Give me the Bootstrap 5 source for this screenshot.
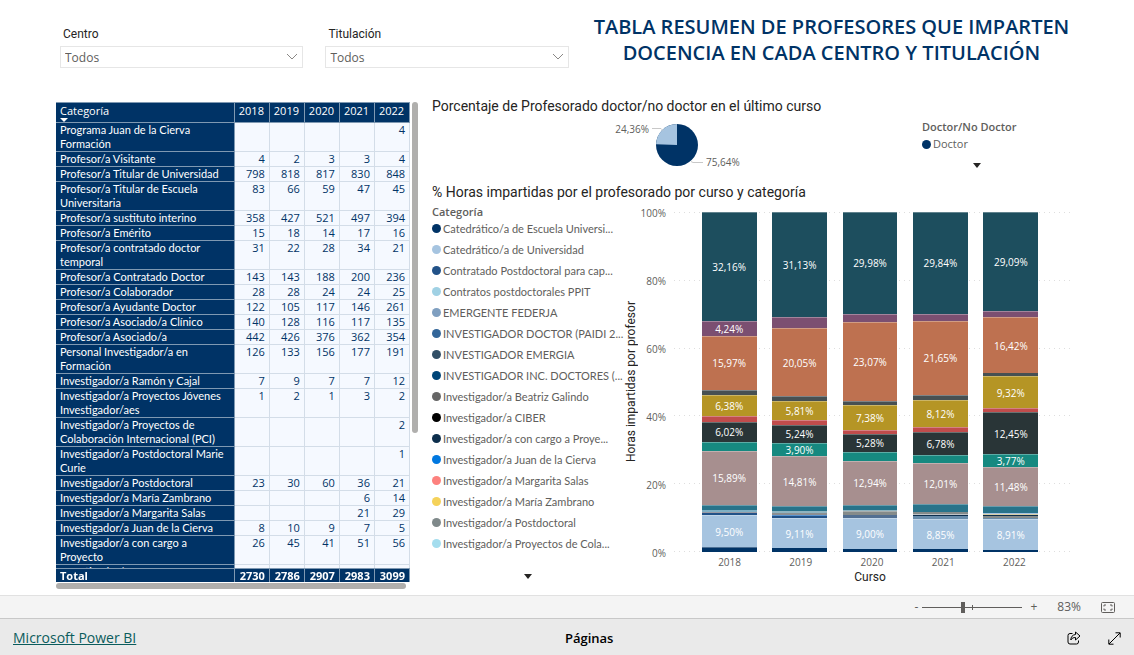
<!DOCTYPE html>
<html lang="es">
<head>
<meta charset="utf-8">
<meta name="viewport" content="width=device-width, initial-scale=1">
<title>Tabla resumen de profesores</title>
<link href="https://cdn.jsdelivr.net/npm/bootstrap@5.3.0/dist/css/bootstrap.min.css" rel="stylesheet">
<style>
  :root { --navy: #003366; --soft: #605e5c; --ink: #252423; }
  body { font-family: "Open Sans", "Noto Sans", sans-serif; font-size: 11px; line-height: 14px; color: var(--ink); }
  .din { font-family: Roboto, sans-serif; }
  .report { padding: 14px 64px 0 56px; }
  .slicers { padding-left: 4px; gap: 22px; flex: 512 1 0; }
  .slicers label { font-size: 12px; line-height: 16px; padding: 12px 0 4px 3px; }
  .slicers select { height: 22px; font-size: 12px; line-height: 16px; padding: 3px 24px 1px 4px; border: 1px solid #e6e6e6; border-radius: 0; color: var(--soft);
    background: #fff url("data:image/svg+xml,%3csvg xmlns='http://www.w3.org/2000/svg' viewBox='0 0 12 8'%3e%3cpath fill='none' stroke='%238a8886' d='M1 1l5 5 5-5'/%3e%3c/svg%3e") no-repeat right 4px center / 12px 8px; }
  .headline { flex: 480 1 0; margin-left: 24px; font-size: 20px; line-height: 26px; font-weight: 600; color: var(--navy); }
  .panels { display: grid; grid-template-columns: minmax(0, 362fr) minmax(0, 638fr); gap: 14px; margin-top: 34px; }

  .matrix-wrap { display: grid; grid-template-columns: minmax(0, 1fr) 6px; column-gap: 2px; row-gap: 1px; }
  .matrix-view { height: 480px; overflow: hidden; }
  .matrix { width: 100%; table-layout: fixed; border-collapse: separate; border-spacing: 0; color: var(--navy); }
  .matrix .col-name { width: 50.5%; }
  .matrix th, .matrix td { padding: 0 4px; vertical-align: top; line-height: 14px; border-right: 1px solid #d3dde8; border-bottom: 1px solid #d3dde8; }
  .matrix td { text-align: right; background: #f5f9ff; }
  .matrix th { font-weight: 400; color: #fff; background: var(--navy); border-color: #7f99b2; }
  .matrix tbody th, .legend-list { font-family: Lato, "Open Sans", sans-serif; }
  .matrix thead th { position: sticky; top: 0; height: 21px; border-top: 1px solid #7f99b2; padding-top: 1px; }
  .matrix tfoot th { position: sticky; bottom: 0; height: 14px; line-height: 13px; font-weight: 700; border-bottom: 0; border-top: 1px solid #7f99b2; }
  .matrix tfoot th + th { text-align: right; }
  .sort-mark { display: block; width: 8px; height: 4px; }
  .thumb-y { height: 331px; border-radius: 3px; background: #b0afad; }
  .thumb-x { width: 99%; height: 6px; border-radius: 3px; background: #b0afad; }

  .chart-title { font-size: 14px; line-height: 18px; font-weight: 400; margin: 0; }
  .pie-title { margin-top: -5px; }
  .pie-row { display: grid; grid-template-columns: 490fr 148fr; padding: 4px 0 6px; }
  .legend-head { font-weight: 600; color: var(--soft); }
  .dot { flex: none; width: 9px; height: 9px; border-radius: 50%; background: var(--navy); }
  .key { gap: 2px; color: var(--soft); }
  .pie-legend { padding-top: 1px; }
  .pie-legend .key { line-height: 20px; }
  .legend-list .key { line-height: 21px; }
  .legend-more { margin-top: 20px; }
  .col-legend { flex: 192 1 0; min-width: 0; padding-top: 4px; }
  .legend-list { margin-top: -1px; }
  .col-plot { flex: 446 1 0; min-width: 0; padding-top: 11px; }
  .y-title { writing-mode: vertical-rl; transform: rotate(180deg); width: 14px; height: 340px; font-size: 12px; text-align: center; }
  .y-ticks { width: 28px; height: 354px; font-size: 10px; color: var(--soft); text-align: right; margin: -6px 8px -8px 0; }
  .plot { height: 340px; padding: 0 24px 0 20px; position: relative; }
  .grid-lines { position: absolute; inset: 0; }
  .grid-lines i { height: 1px; background: repeating-linear-gradient(90deg, #dedede 0 1px, transparent 1px 5px); }
  .bar { position: relative; width: 78%; height: 100%; }
  .seg { color: #fff; font-size: 10px; line-height: 12px; overflow: hidden; display: flex; align-items: center; justify-content: center; }
  .seg.edge { border-top: 1px solid rgba(255, 255, 255, .3); }
  .x-ticks { padding: 3px 20px 0; font-size: 10px; color: var(--soft); }
  .plot-side { flex: 1; min-width: 0; }
  .x-title { font-size: 12px; line-height: 16px; padding-right: 4px; }

  .zoom-bar { height: 23px; background: #f4f4f4; border-top: 1px solid #e1e1e1; padding-right: 19px; color: var(--soft); font-size: 12px; }
  .zoom-bar button, .foot button { background: none; border: 0; padding: 0; color: inherit; display: flex; align-items: center; justify-content: center; }
  .zoom-bar input { -webkit-appearance: none; appearance: none; width: 100px; height: 12px; margin: 0;
    background: linear-gradient(#605e5c, #605e5c) 50px 50% / 1px 5px no-repeat, linear-gradient(#605e5c, #605e5c) 0 50% / 100% 1px no-repeat; }
  .zoom-bar input::-webkit-slider-thumb { -webkit-appearance: none; width: 4px; height: 11px; background: #605e5c; border-radius: 0; }
  .foot { height: 37px; background: #eaeaea; border-top: 1px solid #c8c8c8; padding: 2px 0 0 13px; font-size: 13px; line-height: 20px; }
  .foot a { color: #0b5c5c; font-size: 14px; }
  .foot button { width: 40px; height: 34px; color: #000; }
  .foot-tools { padding-left: 12px; }
</style>
</head>
<body class="d-flex flex-column min-vh-100 bg-white">
<main class="report flex-grow-1">
  <header class="d-flex align-items-start">
    <div class="slicers d-flex">
      <div class="d-flex flex-column flex-fill"><label class="din" for="centro">Centro</label>
        <select id="centro" class="form-select"><option>Todos</option></select></div>
      <div class="d-flex flex-column flex-fill"><label class="din" for="titulacion">Titulación</label>
        <select id="titulacion" class="form-select"><option>Todos</option></select></div>
    </div>
    <h1 class="headline text-center mb-0">TABLA RESUMEN DE PROFESORES QUE IMPARTEN DOCENCIA EN CADA CENTRO Y TITULACIÓN</h1>
  </header>

  <div class="panels">
    <section class="matrix-wrap align-content-start">
      <div class="matrix-view">
        <table class="matrix">
          <colgroup><col class="col-name"><col><col><col><col><col></colgroup>
          <thead><tr><th scope="col">Categoría<svg class="sort-mark" viewBox="0 0 8 4"><path fill="#fff" d="M0 0h8L4 4z"/></svg></th><th scope="col">2018</th><th scope="col">2019</th><th scope="col">2020</th><th scope="col">2021</th><th scope="col">2022</th></tr></thead>
          <tbody>
            <tr><th scope="row">Programa Juan de la Cierva Formación</th><td></td><td></td><td></td><td></td><td>4</td></tr>
            <tr><th scope="row">Profesor/a Visitante</th><td>4</td><td>2</td><td>3</td><td>3</td><td>4</td></tr>
            <tr><th scope="row">Profesor/a Titular de Universidad</th><td>798</td><td>818</td><td>817</td><td>830</td><td>848</td></tr>
            <tr><th scope="row">Profesor/a Titular de Escuela Universitaria</th><td>83</td><td>66</td><td>59</td><td>47</td><td>45</td></tr>
            <tr><th scope="row">Profesor/a sustituto interino</th><td>358</td><td>427</td><td>521</td><td>497</td><td>394</td></tr>
            <tr><th scope="row">Profesor/a Emérito</th><td>15</td><td>18</td><td>14</td><td>17</td><td>16</td></tr>
            <tr><th scope="row">Profesor/a contratado doctor temporal</th><td>31</td><td>22</td><td>28</td><td>34</td><td>21</td></tr>
            <tr><th scope="row">Profesor/a Contratado Doctor</th><td>143</td><td>143</td><td>188</td><td>200</td><td>236</td></tr>
            <tr><th scope="row">Profesor/a Colaborador</th><td>28</td><td>28</td><td>24</td><td>24</td><td>25</td></tr>
            <tr><th scope="row">Profesor/a Ayudante Doctor</th><td>122</td><td>105</td><td>117</td><td>146</td><td>261</td></tr>
            <tr><th scope="row">Profesor/a Asociado/a Clínico</th><td>140</td><td>128</td><td>116</td><td>117</td><td>135</td></tr>
            <tr><th scope="row">Profesor/a Asociado/a</th><td>442</td><td>426</td><td>376</td><td>362</td><td>354</td></tr>
            <tr><th scope="row">Personal Investigador/a en Formación</th><td>126</td><td>133</td><td>156</td><td>177</td><td>191</td></tr>
            <tr><th scope="row">Investigador/a Ramón y Cajal</th><td>7</td><td>9</td><td>7</td><td>7</td><td>12</td></tr>
            <tr><th scope="row">Investigador/a Proyectos Jóvenes Investigador/aes</th><td>1</td><td>2</td><td>1</td><td>3</td><td>2</td></tr>
            <tr><th scope="row">Investigador/a Proyectos de Colaboración Internacional (PCI)</th><td></td><td></td><td></td><td></td><td>2</td></tr>
            <tr><th scope="row">Investigador/a Postdoctoral Marie Curie</th><td></td><td></td><td></td><td></td><td>1</td></tr>
            <tr><th scope="row">Investigador/a Postdoctoral</th><td>23</td><td>30</td><td>60</td><td>36</td><td>21</td></tr>
            <tr><th scope="row">Investigador/a María Zambrano</th><td></td><td></td><td></td><td>6</td><td>14</td></tr>
            <tr><th scope="row">Investigador/a Margarita Salas</th><td></td><td></td><td></td><td>21</td><td>29</td></tr>
            <tr><th scope="row">Investigador/a Juan de la Cierva</th><td>8</td><td>10</td><td>9</td><td>7</td><td>5</td></tr>
            <tr><th scope="row">Investigador/a con cargo a Proyecto</th><td>26</td><td>45</td><td>41</td><td>51</td><td>56</td></tr>
            <tr><th scope="row">Investigador/a CIBER</th><td>2</td><td>2</td><td>2</td><td>4</td><td>2</td></tr>
          </tbody>
          <tfoot><tr><th scope="row">Total</th><th>2730</th><th>2786</th><th>2907</th><th>2983</th><th>3099</th></tr></tfoot>
        </table>
      </div>
      <div class="thumb-y"></div>
      <div class="thumb-x"></div>
    </section>

    <section>
      <h2 class="chart-title pie-title din">Porcentaje de Profesorado doctor/no doctor en el último curso</h2>
      <div class="pie-row">
        <svg class="d-block mx-auto" width="130" height="50" viewBox="0 0 130 50" font-size="10" fill="#605e5c" role="img" aria-label="Doctor 75,64%, no doctor 24,36%">
          <circle cx="65" cy="26" r="21" fill="#003366"/>
          <path d="M65 26V5A21 21 0 0 0 44 25.200z" fill="#a6c4e0"/>
          <path d="M40 9.500h9l2 2M79 42.500l2 1h10" fill="none" stroke="#c8c8c8"/>
          <text x="37" y="14" text-anchor="end">24,36%</text><text x="94" y="47">75,64%</text>
        </svg>
        <div class="pie-legend">
          <div class="legend-head">Doctor/No Doctor</div>
          <div class="key d-flex align-items-center"><span class="dot"></span>Doctor</div>
          <svg class="d-block mt-2" width="110" height="7"><path d="M51 1h8l-4 5z" fill="#252423"/></svg>
        </div>
      </div>
      <h2 class="chart-title din mt-2">% Horas impartidas por el profesorado por curso y categoría</h2>
      <div class="d-flex">
        <div class="col-legend">
          <div class="legend-head">Categoría</div>
          <div class="legend-list" id="keys"></div>
          <svg class="legend-more d-block mx-auto" width="8" height="6"><path d="M0 0h8l-4 5z" fill="#252423"/></svg>
        </div>
        <div class="col-plot d-flex">
          <div class="y-title din">Horas impartidas por profesor</div>
          <div class="y-ticks d-flex flex-column justify-content-between"><span>100%</span><span>80%</span><span>60%</span><span>40%</span><span>20%</span><span>0%</span></div>
          <div class="plot-side">
            <div class="plot d-flex">
              <div class="grid-lines d-flex flex-column justify-content-between"><i></i><i></i><i></i><i></i><i></i><i></i></div>
              <div class="d-flex flex-fill" id="bars"></div>
            </div>
            <div class="x-ticks d-flex text-center"><span class="flex-fill">2018</span><span class="flex-fill">2019</span><span class="flex-fill">2020</span><span class="flex-fill">2021</span><span class="flex-fill">2022</span></div>
            <div class="x-title din text-center">Curso</div>
          </div>
        </div>
      </div>
    </section>
  </div>
</main>

<div class="zoom-bar d-flex align-items-center justify-content-end">
  <button type="button" aria-label="Reducir">-</button>
  <input class="mx-1" type="range" min="0" max="100" value="40" aria-label="Zoom">
  <button type="button" class="ms-1" aria-label="Ampliar">+</button>
  <span class="mx-3 px-1">83%</span>
  <button type="button" aria-label="Ajustar a la página"><svg width="14" height="11" viewBox="0 0 14 11" fill="none" stroke="currentColor"><rect x=".5" y=".5" width="13" height="10" rx="1"/><path d="M3 4.500v-1.500h2M9 3h2v1.500M11 6.500v1.500h-2M5 8h-2v-1.500"/></svg></button>
</div>
<footer class="foot d-flex align-items-center justify-content-between">
  <a href="#">Microsoft Power BI</a>
  <span class="fw-semibold text-black">Páginas</span>
  <div class="foot-tools d-flex">
    <button type="button" aria-label="Compartir"><svg width="14" height="14" viewBox="0 0 14 14" fill="none" stroke="currentColor" stroke-linejoin="round"><path d="M5.500 2.500H3a2 2 0 0 0-2 2V11a2 2 0 0 0 2 2h6.500a2 2 0 0 0 2-2V9.500"/><path d="M8.500 1l4.500 4-4.500 4V6.500C6.500 6.500 5 7 3.800 9c0-3 1.700-5.200 4.700-5.500z"/></svg></button>
    <button type="button" aria-label="Pantalla completa"><svg width="13" height="13" viewBox="0 0 13 13" fill="none" stroke="currentColor"><path d="M1 12L12 1M7.500 .8h4.700v4.700M.8 7.500v4.700h4.700"/></svg></button>
  </div>
</footer>

<script src="https://cdn.jsdelivr.net/npm/bootstrap@5.3.0/dist/js/bootstrap.bundle.min.js"></script>
<script>
  const keys = [
    ['Catedrático/a de Escuela Universi...', '#003366'], ['Catedrático/a de Universidad', '#a6c4e0'],
    ['Contratado Postdoctoral para cap...', '#225288'], ['Contratos postdoctorales PPIT', '#a0d1e4'],
    ['EMERGENTE FEDERJA', '#7f9fc0'], ['INVESTIGADOR DOCTOR (PAIDI 2...', '#336699'],
    ['INVESTIGADOR EMERGIA', '#324f66'], ['INVESTIGADOR INC. DOCTORES (...', '#004578'],
    ['Investigador/a Beatriz Galindo', '#666666'], ['Investigador/a CIBER', '#000000'],
    ['Investigador/a con cargo a Proye...', '#0d2f4d'], ['Investigador/a Juan de la Cierva', '#0078e0'],
    ['Investigador/a Margarita Salas', '#fd817e'], ['Investigador/a María Zambrano', '#f5d25a'],
    ['Investigador/a Postdoctoral', '#7f898a'], ['Investigador/a Proyectos de Cola...', '#a4ddee']];
  document.getElementById('keys').innerHTML = keys.map(([name, color]) =>
    `<div class="key d-flex align-items-center text-nowrap"><span class="dot" style="background:${color}"></span>${name}</div>`).join('');

  // Each segment, top to bottom: share, colour, and 1 where the share is written on it
  const T = '#1d4e5e', P = '#7b4f71', O = '#be7150', S = '#475052', G = '#b59525', R = '#c04c4c', D = '#293537',
        E = '#168980', M = '#a78f8f', B = '#28738a', L = '#a6c4e0', N = '#003366';
  const years = [
    [[32.16,T,1],[4.24,P,1],[15.97,O,1],[1.5,S],[6.38,G,1],[1.5,R],[6.02,D,1],[2.6,E],[15.89,M,1],[1.5,B],[.5,'#7fb0c4'],[.5,'#9a9ba5'],[.6,'#225288'],[9.5,L,1],[1.3,N]],
    [[31.13,T,1],[3.2,P],[20.05,O,1],[1.3,S],[5.81,G,1],[1.4,R],[5.24,D,1],[3.9,E,1],[14.81,M,1],[1.5,B],[.4,'#8fb4c0'],[.6,'#8b8f92'],[.4,'#5a94d0'],[.5,'#225288'],[9.11,L,1],[1,N]],
    [[29.98,T,1],[2.5,P],[23.07,O,1],[1.2,S],[7.38,G,1],[1.1,R],[5.28,D,1],[2.6,E],[12.94,M,1],[1.7,B],[.3,'#8fb4c0'],[1.1,'#858b8a'],[.9,'#526f92'],[9,L,1],[.9,N]],
    [[29.84,T,1],[2.1,P],[21.65,O,1],[1.5,S],[8.12,G,1],[1.2,R],[6.78,D,1],[2.6,E],[12.01,M,1],[2.1,B],[.6,'#858b8a'],[.4,'#c0c4c8'],[.4,'#0d2f4d'],[.8,'#688cab'],[8.85,L,1],[.8,N]],
    [[29.09,T,1],[1.8,P],[16.42,O,1],[.9,S],[9.32,G,1],[1.1,R],[12.45,D,1],[3.77,E,1],[11.48,M,1],[1.9,B],[.3,'#a6c4e0'],[.4,'#d9cfa5'],[.4,'#0d2f4d'],[.5,'#858b8a'],[.3,'#688cab'],[8.91,L,1],[.7,N]]];
  document.getElementById('bars').innerHTML = years.map(segs => {
    const sum = segs.reduce((a, s) => a + s[0], 0);
    return '<div class="d-flex flex-fill justify-content-center"><div class="bar">' + segs.map(([v, c, show]) =>
      `<div class="seg${v > 1 ? ' edge' : ''}" style="height:${(v / sum * 100).toFixed(3)}%;background-color:${c}">${show ? v.toFixed(2).replace('.', ',') + '%' : ''}</div>`).join('') + '</div></div>';
  }).join('');
</script>
</body>
</html>
